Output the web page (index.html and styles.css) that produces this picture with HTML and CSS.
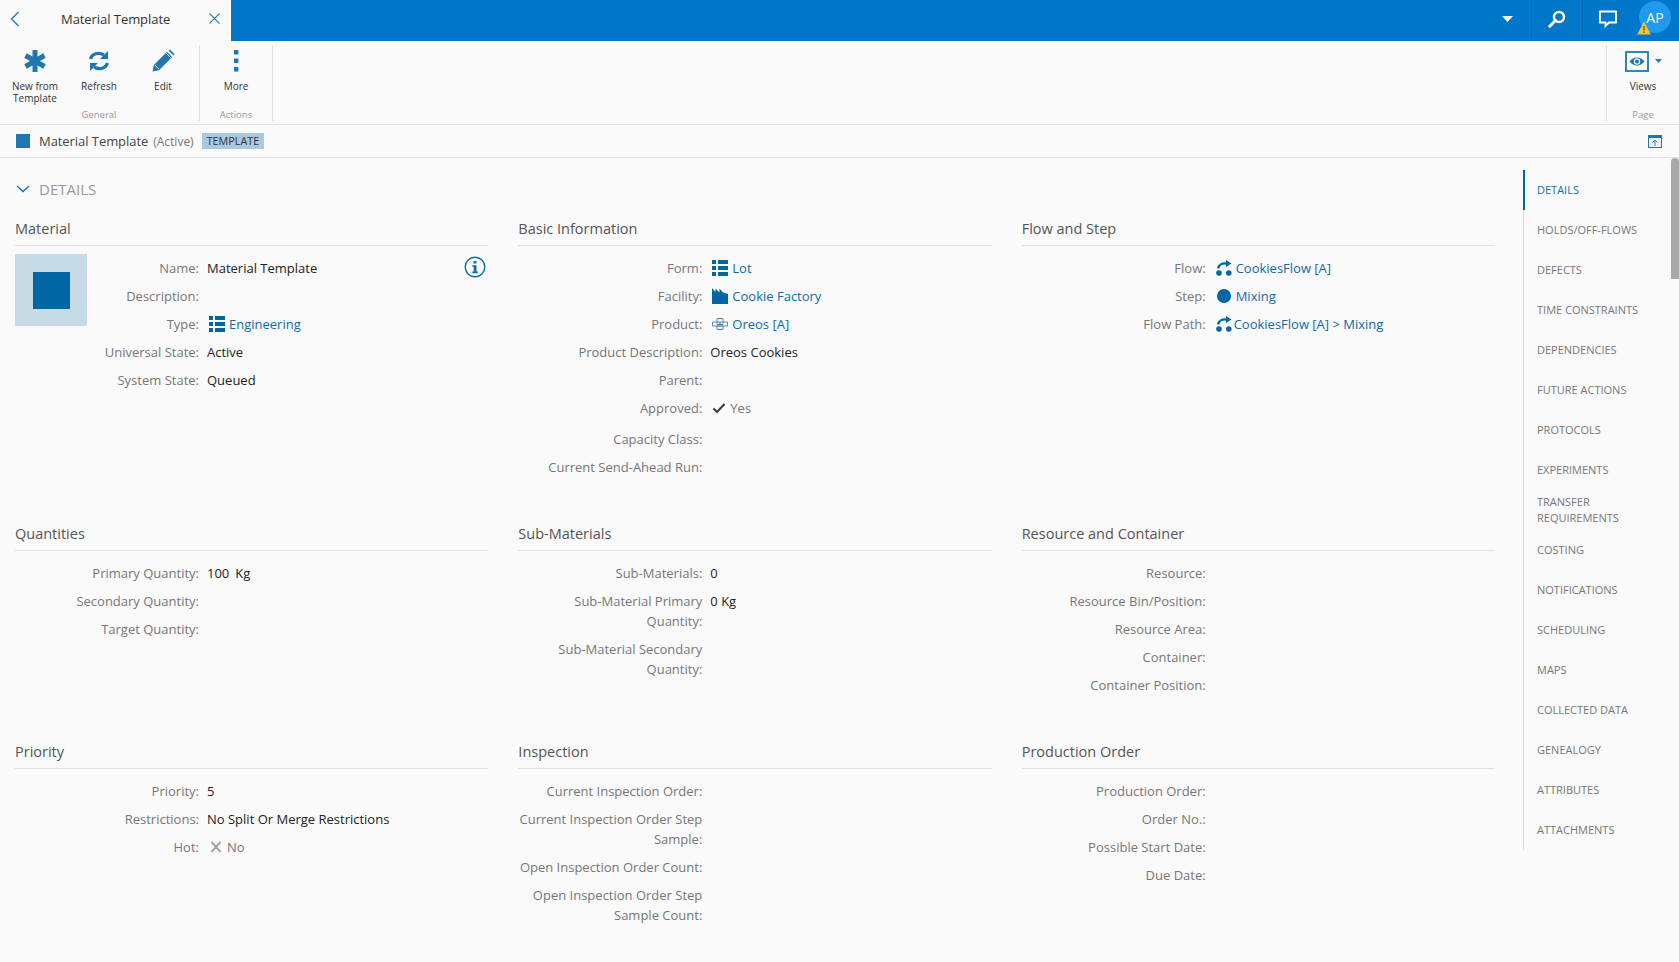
FILE: index.html
```html
<!DOCTYPE html>
<html lang="en">
<head>
<meta charset="utf-8">
<title>Material Template</title>
<link rel="stylesheet" href="styles.css">
</head>
<body>
<svg class="defs" width="0" height="0" aria-hidden="true">
  <symbol id="i-list" viewBox="0 0 16 16"><path d="M0 0h4v4H0zM6 0h10v4H6zM0 6h4v4H0zM6 6h10v4H6zM0 12h4v4H0zM6 12h10v4H6z" fill="#0066a4"/></symbol>
  <symbol id="i-flow" viewBox="0 0 16 16"><circle cx="3" cy="13" r="2.800" fill="#0066a4"/><circle cx="12.800" cy="13" r="2.800" fill="#0066a4"/><path d="M2.200 8.500C2.600 4.800 6 3 10.500 3.400" fill="none" stroke="#0066a4" stroke-width="2.400"/><path d="M10 0l5.500 3.400L10 7z" fill="#0066a4"/></symbol>
</svg>
<header class="topbar">
  <div class="tab">
    <svg class="tab-back" width="10" height="16" viewBox="0 0 10 16"><path d="M8.500 1L1.500 8l7 7" fill="none" stroke="#2a7ab5" stroke-width="1.400"/></svg>
    <span class="tab-title">Material Template</span>
    <svg class="tab-close" width="11" height="11" viewBox="0 0 11 11"><path d="M.5.5l10 10M10.500 .5l-10 10" stroke="#3d7fb0" stroke-width="1.100"/></svg>
  </div>
  <div class="top-actions">
    <div class="top-btn top-caret"><svg width="11" height="6" viewBox="0 0 11 6"><path d="M0 0h11L5.500 6z" fill="#fff"/></svg></div>
    <div class="top-btn top-search"><svg width="18" height="18" viewBox="0 0 18 18"><circle cx="11" cy="7" r="5" fill="none" stroke="#fff" stroke-width="2.400"/><path d="M7.500 10.500L1.800 16.200" stroke="#fff" stroke-width="3" stroke-linecap="round"/></svg></div>
    <div class="top-btn top-chat"><svg width="18" height="18" viewBox="0 0 18 18"><path d="M1 1.500h16v11h-7l-3.500 3.500v-3.500H1z" fill="none" stroke="#fff" stroke-width="1.800"/></svg></div>
    <div class="avatar">AP
      <svg class="avatar-warn" width="14" height="14" viewBox="0 0 14 14"><path d="M7 .5L13.800 13.500H.2z" fill="#f2c23e"/><path d="M6.300 5h1.400v4.500H6.300zM6.300 10.500h1.400V12H6.300z" fill="#7a5a00"/></svg>
    </div>
  </div>
</header>
<section class="toolbar">
  <div class="tgroup tgroup-general">
    <div class="tbuttons">
      <div class="tbtn">
        <svg width="24" height="24" viewBox="0 0 24 24"><g stroke="#1f77b0" stroke-width="5"><path d="M12 1v22M2.500 6.500l19 11M21.500 6.500l-19 11"/></g></svg>
        <span>New from Template</span>
      </div>
      <div class="tbtn">
        <svg width="24" height="24" viewBox="0 0 24 24"><path d="M3.500 10C5 5 11 2.500 17 6" fill="none" stroke="#1f77b0" stroke-width="3.200"/><path d="M21 2v8h-8z" fill="#1f77b0"/><path d="M20.500 14C19 19 13 21.500 7 18" fill="none" stroke="#1f77b0" stroke-width="3.200"/><path d="M3 22v-8h8z" fill="#1f77b0"/></svg>
        <span>Refresh</span>
      </div>
      <div class="tbtn">
        <svg width="24" height="24" viewBox="0 0 24 24"><path d="M1.500 22.500l1.300-6.500L16 2.800l5.200 5.200L8 21.200z" fill="#1f77b0"/><path d="M17.500 1.500l1.500-1 4.500 4.500-1 1.500z" fill="#1f77b0"/><path d="M3.800 16l4.200 4.200" stroke="#fafafa" stroke-width="1"/><path d="M15 4l5 5" stroke="#fafafa" stroke-width="1"/></svg>
        <span>Edit</span>
      </div>
    </div>
    <div class="tgroup-label">General</div>
  </div>
  <div class="tgroup tgroup-actions">
    <div class="tbuttons">
      <div class="tbtn tbtn-wide">
        <svg width="24" height="24" viewBox="0 0 24 24"><path d="M10 1h4.400v4.400H10zM10 9.500h4.400v4.400H10zM10 18h4.400v4.400H10z" fill="#1f77b0"/></svg>
        <span>More</span>
      </div>
    </div>
    <div class="tgroup-label">Actions</div>
  </div>
  <div class="tgroup tgroup-page">
    <div class="tbuttons">
      <div class="tbtn tbtn-views">
        <div class="views-icon">
          <svg width="24" height="21" viewBox="0 0 24 21"><rect x="1" y="1" width="22" height="19" fill="none" stroke="#1f77b0" stroke-width="1.800"/><path d="M4.500 10.500C8.500 5 15.500 5 19.500 10.500C15.500 16 8.500 16 4.500 10.500z" fill="#1f77b0"/><circle cx="12" cy="10.500" r="3.200" fill="#fafafa"/><circle cx="12" cy="10.500" r="2" fill="#1f77b0"/></svg>
          <svg width="7" height="4" viewBox="0 0 7 4"><path d="M0 0h7L3.500 4z" fill="#2a7ab5"/></svg>
        </div>
        <span>Views</span>
      </div>
    </div>
    <div class="tgroup-label">Page</div>
  </div>
</section>
<section class="titlebar">
  <span class="title-square"></span>
  <span class="title-name">Material Template</span>
  <span class="title-state">(Active)</span>
  <span class="title-badge">TEMPLATE</span>
  <svg class="title-collapse" width="14" height="13" viewBox="0 0 14 13"><rect width="14" height="13" fill="#1f77b0"/><rect x="1" y="3" width="12" height="9" fill="#eef3f7"/><path d="M7 11V5M4.500 7.500L7 5l2.500 2.500" fill="none" stroke="#5a7d96" stroke-width="1"/></svg>
</section>
<main class="main">
  <div class="content">
    <div class="details-head">
      <svg width="14" height="8" viewBox="0 0 14 8"><path d="M1 1l6 5.500L13 1" fill="none" stroke="#1f6ea8" stroke-width="1.300"/></svg>
      <span>DETAILS</span>
    </div>
    <div class="sections">
      <section class="sec">
        <h3>Material</h3>
        <div class="sec-hero"><span></span></div>
        <svg class="sec-info" width="22" height="22" viewBox="0 0 22 22"><circle cx="11" cy="11" r="9.800" fill="none" stroke="#0b6fae" stroke-width="1.400"/><path d="M9.500 5h3v2.600h-3zM8.500 9.300h4v6.200h1.300v1.700H8.300v-1.700h1.400v-4.500H8.500z" fill="#0b6fae"/></svg>
        <dl>
          <div class="row"><dt>Name:</dt><dd>Material Template</dd></div>
          <div class="row"><dt>Description:</dt><dd></dd></div>
          <div class="row"><dt>Type:</dt><dd class="link"><svg class="ic" width="16" height="16"><use href="#i-list"/></svg>Engineering</dd></div>
          <div class="row"><dt>Universal State:</dt><dd>Active</dd></div>
          <div class="row"><dt>System State:</dt><dd>Queued</dd></div>
        </dl>
      </section>
      <section class="sec">
        <h3>Basic Information</h3>
        <dl>
          <div class="row"><dt>Form:</dt><dd class="link"><svg class="ic" width="16" height="16"><use href="#i-list"/></svg>Lot</dd></div>
          <div class="row"><dt>Facility:</dt><dd class="link"><svg class="ic" width="16" height="16" viewBox="0 0 16 16"><path d="M0 0L3.500 4V.5L7.500 4.500V.5L11 4.500 16 6V16H0z" fill="#0066a4"/></svg>Cookie Factory</dd></div>
          <div class="row"><dt>Product:</dt><dd class="link"><svg class="ic" width="16" height="16" viewBox="0 0 16 16"><path d="M5 2.500h6v6H5zM.5 6h7.500v4H.5zM8 6h7.500v4H8zM5 10h6v3.500H5z" fill="none" stroke="#5b8db5" stroke-width="1"/></svg>Oreos [A]</dd></div>
          <div class="row"><dt>Product Description:</dt><dd>Oreos Cookies</dd></div>
          <div class="row"><dt>Parent:</dt><dd></dd></div>
          <div class="row row-tall"><dt>Approved:</dt><dd class="muted"><svg class="ic" width="14" height="12" viewBox="0 0 14 12"><path d="M1.500 6.500l3.500 3.500 7.500-8" fill="none" stroke="#3b3b3b" stroke-width="2"/></svg>Yes</dd></div>
          <div class="row"><dt>Capacity Class:</dt><dd></dd></div>
          <div class="row"><dt>Current Send-Ahead Run:</dt><dd></dd></div>
        </dl>
      </section>
      <section class="sec">
        <h3>Flow and Step</h3>
        <dl>
          <div class="row"><dt>Flow:</dt><dd class="link"><svg class="ic" width="16" height="16"><use href="#i-flow"/></svg>CookiesFlow [A]</dd></div>
          <div class="row"><dt>Step:</dt><dd class="link"><svg class="ic" width="16" height="16" viewBox="0 0 16 16"><circle cx="8" cy="8" r="7" fill="#0066a4"/></svg>Mixing</dd></div>
          <div class="row"><dt>Flow Path:</dt><dd class="link tight"><svg class="ic" width="16" height="16"><use href="#i-flow"/></svg>CookiesFlow [A] &gt; Mixing</dd></div>
        </dl>
      </section>
      <section class="sec">
        <h3>Quantities</h3>
        <dl>
          <div class="row"><dt>Primary Quantity:</dt><dd>100<span class="unit">Kg</span></dd></div>
          <div class="row"><dt>Secondary Quantity:</dt><dd></dd></div>
          <div class="row"><dt>Target Quantity:</dt><dd></dd></div>
        </dl>
      </section>
      <section class="sec">
        <h3>Sub-Materials</h3>
        <dl>
          <div class="row"><dt>Sub-Materials:</dt><dd>0</dd></div>
          <div class="row"><dt>Sub-Material Primary Quantity:</dt><dd>0 Kg</dd></div>
          <div class="row"><dt>Sub-Material Secondary Quantity:</dt><dd></dd></div>
        </dl>
      </section>
      <section class="sec">
        <h3>Resource and Container</h3>
        <dl>
          <div class="row"><dt>Resource:</dt><dd></dd></div>
          <div class="row"><dt>Resource Bin/Position:</dt><dd></dd></div>
          <div class="row"><dt>Resource Area:</dt><dd></dd></div>
          <div class="row"><dt>Container:</dt><dd></dd></div>
          <div class="row"><dt>Container Position:</dt><dd></dd></div>
        </dl>
      </section>
      <section class="sec">
        <h3>Priority</h3>
        <dl>
          <div class="row"><dt>Priority:</dt><dd>5</dd></div>
          <div class="row"><dt>Restrictions:</dt><dd>No Split Or Merge Restrictions</dd></div>
          <div class="row"><dt>Hot:</dt><dd class="muted"><svg class="ic" width="14" height="12" viewBox="0 0 14 12"><path d="M2.500 1l9 10M11.500 1l-9 10" stroke="#a3a3a3" stroke-width="2"/></svg>No</dd></div>
        </dl>
      </section>
      <section class="sec">
        <h3>Inspection</h3>
        <dl>
          <div class="row"><dt>Current Inspection Order:</dt><dd></dd></div>
          <div class="row"><dt>Current Inspection Order Step Sample:</dt><dd></dd></div>
          <div class="row"><dt>Open Inspection Order Count:</dt><dd></dd></div>
          <div class="row"><dt>Open Inspection Order Step Sample Count:</dt><dd></dd></div>
        </dl>
      </section>
      <section class="sec">
        <h3>Production Order</h3>
        <dl>
          <div class="row"><dt>Production Order:</dt><dd></dd></div>
          <div class="row"><dt>Order No.:</dt><dd></dd></div>
          <div class="row"><dt>Possible Start Date:</dt><dd></dd></div>
          <div class="row"><dt>Due Date:</dt><dd></dd></div>
        </dl>
      </section>
    </div>
  </div>
  <nav class="sidenav">
    <a class="active">Details</a>
    <a>Holds/Off-Flows</a>
    <a>Defects</a>
    <a>Time Constraints</a>
    <a>Dependencies</a>
    <a>Future Actions</a>
    <a>Protocols</a>
    <a>Experiments</a>
    <a>Transfer Requirements</a>
    <a>Costing</a>
    <a>Notifications</a>
    <a>Scheduling</a>
    <a>Maps</a>
    <a>Collected Data</a>
    <a>Genealogy</a>
    <a>Attributes</a>
    <a>Attachments</a>
  </nav>
  <div class="scrolltrack"><div class="scrollthumb"></div></div>
</main>
</body>
</html>
```
FILE: styles.css
```css
* { box-sizing: border-box; }
html, body { margin: 0; height: 100%; }
body {
  display: flex;
  flex-direction: column;
  height: 962px;
  overflow: hidden;
  background: #fafafa;
  font-family: "Open Sans", "Liberation Sans", sans-serif;
  font-size: 13px;
  color: #333;
}
.defs { position: absolute; }

.topbar {
  display: flex;
  justify-content: space-between;
  height: 41px;
  flex: none;
  background: #0077c8;
}
.tab {
  display: flex;
  align-items: center;
  width: 231px;
  background: #fafafa;
  padding: 0 11px 4px 10px;
}
.tab-title { flex: 1; margin-left: 41px; color: #333; letter-spacing: -0.06px; }
.top-actions { display: flex; align-items: center; padding-right: 8px; }
.top-btn {
  display: flex;
  align-items: center;
  justify-content: center;
  height: 41px;
  padding-bottom: 3px;
  border-left: 1px solid #0069b2;
}
.top-caret { border-left: 0; width: 48px; }
.top-search { width: 51px; }
.top-chat { width: 50px; }
.avatar {
  position: relative;
  display: flex;
  align-items: center;
  justify-content: center;
  width: 32px;
  height: 32px;
  margin-left: 7px;
  margin-bottom: 7px;
  border-radius: 50%;
  background: #1e9bf0;
  color: #fff;
  font-size: 14px;
}
.avatar-warn { position: absolute; left: -2px; top: 20px; }

.toolbar {
  display: flex;
  height: 84px;
  flex: none;
  padding: 4px 0 0 3px;
  border-bottom: 1px solid #e1e1e1;
}
.tgroup {
  display: flex;
  flex-direction: column;
  height: 76px;
  border-right: 1px solid #e1e1e1;
}
.tgroup-general { width: 197px; }
.tgroup-actions { width: 73px; }
.tgroup-page {
  width: 73px;
  margin-left: auto;
  border-right: 0;
  border-left: 1px solid #e1e1e1;
}
.tbuttons { display: flex; flex: 1; }
.tgroup-label {
  height: 13px;
  font-size: 9.500px;
  line-height: 14px;
  color: #999;
  text-align: center;
}
.tgroup-general .tgroup-label { width: 192px; }
.tbtn {
  display: flex;
  flex-direction: column;
  align-items: center;
  width: 64px;
  padding-top: 4px;
  font-size: 10px;
  line-height: 12px;
  color: #333;
  text-align: center;
}
.tbtn span { display: block; margin-top: 7px; width: 54px; }
.tbtn-wide { width: 72px; }
.tbtn-views { width: 72px; }
.views-icon { display: flex; align-items: center; gap: 6px; height: 24px; }

.titlebar {
  display: flex;
  align-items: center;
  height: 33px;
  flex: none;
  padding: 0 17px 0 16px;
  border-bottom: 1px solid #e1e1e1;
}
.title-square { width: 14px; height: 14px; background: #1f77b0; margin-right: 9px; }
.title-name { color: #444; letter-spacing: -0.06px; }
.title-state { margin-left: 5px; font-size: 12px; color: #777; }
.title-badge {
  margin-left: 8px;
  padding: 0 5px;
  height: 16px;
  line-height: 16px;
  background: #a9c9e0;
  font-size: 10.800px;
  color: #333;
}
.title-collapse { margin-left: auto; }

.main { display: flex; flex: 1; min-height: 0; }
.content { width: 1523px; flex: none; padding: 0 28px 0 15px; }
.details-head {
  display: flex;
  align-items: center;
  height: 62px;
  padding: 0 0 0 1px;
  gap: 9px;
  font-size: 15px;
  color: #999;
}
.sections {
  display: grid;
  grid-template-columns: repeat(3, 1fr);
  column-gap: 30px;
  row-gap: 38px;
  align-items: start;
  margin-top: -6px;
}
.sec { position: relative; }
.sec h3 {
  margin: 0 0 8px;
  height: 32px;
  padding-top: 5px;
  font-size: 14.500px;
  line-height: 20px;
  font-weight: 400;
  color: #555;
  border-bottom: 1px solid #e1e1e1;
}
.sec-hero {
  position: absolute;
  left: 0;
  top: 40px;
  display: flex;
  align-items: center;
  justify-content: center;
  width: 72px;
  height: 72px;
  background: #c7dbe7;
}
.sec-hero span { width: 37px; height: 37px; background: #0066a4; }
.sec-info { position: absolute; right: 2px; top: 42px; }
dl { margin: 0; }
.row {
  display: flex;
  gap: 8px;
  padding: 4px 0;
  line-height: 20px;
  font-size: 13px;
}
.row-tall { padding-bottom: 7px; }
dt { width: 184px; flex: none; text-align: right; color: #777; }
dd {
  display: flex;
  align-items: center;
  align-self: flex-start;
  min-height: 20px;
  margin: 0;
  color: #222;
}
dd.link { color: #0f6ba8; }
dd.muted { color: #777; }
.unit { margin-left: 6px; }
.ic { flex: none; margin: 0 4px 0 2px; }
.tight .ic { margin-right: 2px; }

.sidenav {
  display: flex;
  flex-direction: column;
  width: 148px;
  height: 680px;
  flex: none;
  margin-top: 12px;
  border-left: 1px solid #d9d9d9;
}
.sidenav a {
  display: flex;
  align-items: center;
  height: 40px;
  flex: none;
  padding: 0 20px 0 12px;
  margin-left: -1px;
  border-left: 2px solid transparent;
  font-size: 11px;
  line-height: 16px;
  color: #777;
  text-transform: uppercase;
}
.sidenav a.active { border-left-color: #0066a4; color: #1f6ea8; }
.scrolltrack { width: 8px; flex: none; }
.scrollthumb { width: 8px; height: 121px; border-radius: 4px 4px 0 0; background: #a8a8a8; }
```
